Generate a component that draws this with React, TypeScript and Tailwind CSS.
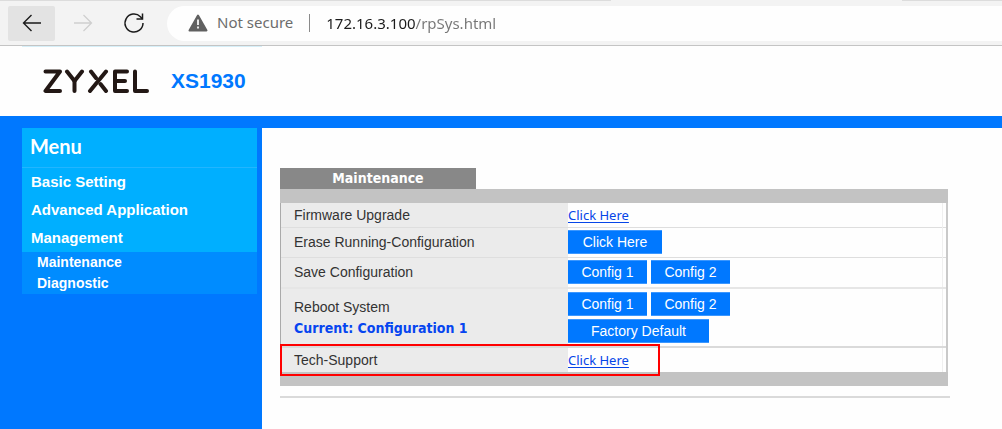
import type { ButtonHTMLAttributes, ReactNode } from "react";

const menuItems = ["Basic Setting", "Advanced Application", "Management"];
const subItems = ["Maintenance", "Diagnostic"];

function ActionButton({ className = "w-[79px]", ...props }: ButtonHTMLAttributes<HTMLButtonElement>) {
  return (
    <button
      type="button"
      className={`h-6 border-y border-[#3b97ff] bg-[#0078ff] text-sm leading-5 text-white ${className}`}
      {...props}
    />
  );
}

function ClickLink({ label }: { label: string }) {
  return (
    <a href="#" aria-label={label} className="font-['Noto_Sans',sans-serif] text-[13px] leading-5 text-[#0645e8] underline underline-offset-2">
      Click Here
    </a>
  );
}

function Row({ label, children, className, line = "border-b border-[#dedede]" }: { label: ReactNode; children: ReactNode; className: string; line?: string }) {
  return (
    <tr className={`${className} ${line}`}>
      <th scope="row" className="relative w-[287px] bg-[#ebebeb] pl-[13px] text-left font-normal">
        {label}
      </th>
      <td className="p-0">{children}</td>
      <td className="w-1 border-l border-[#efefef] p-0" />
    </tr>
  );
}

function ZyxelLogo() {
  return (
    <svg width="106" height="24" viewBox="0 0 106 24" role="img" aria-label="Zyxel" fill="none" stroke="#231815" strokeWidth="4" strokeLinecap="round" strokeLinejoin="round">
      <polyline points="2.5,2.5 17,2.5 2.5,22 17,22" />
      <polyline points="24,2.5 31.5,12 39,2.5" />
      <line x1="31.5" y1="12" x2="31.5" y2="22" />
      <line x1="48" y1="2.5" x2="53" y2="9" />
      <line x1="63" y1="2.5" x2="47" y2="22" />
      <line x1="57.5" y1="15" x2="63" y2="22" />
      <polyline points="84,2.5 72,2.5 72,22 84,22" />
      <line x1="72" y1="12" x2="82" y2="12" />
      <polyline points="92,2.5 92,22 104,22" />
    </svg>
  );
}

function BrowserBar() {
  return (
    <div className="bg-[#f3f3f3]">
      <div className="flex h-px justify-between">
        <span className="w-[61%] bg-[#dcdcdc]" />
        <span className="w-[10%] bg-[#dcdcdc]" />
      </div>
      <div className="flex h-[45px] items-center border-b border-[#c4c4c4] pl-2">
        <button type="button" aria-label="Back" className="flex h-[35px] w-[47px] items-center justify-center rounded-xs bg-[#e3e3e3]">
          <svg width="20" height="18" viewBox="0 0 20 18" fill="none" stroke="#1b1b1b" strokeWidth="1.4">
            <path d="M19 9H1.5M9.5 1L1.5 9l8 8" />
          </svg>
        </button>
        <button type="button" aria-label="Forward" className="ml-1 flex h-[35px] w-[47px] items-center justify-center">
          <svg width="20" height="18" viewBox="0 0 20 18" fill="none" stroke="#cfcfcf" strokeWidth="1.3">
            <path d="M1 9h17.5M10.5 1l8 8-8 8" />
          </svg>
        </button>
        <button type="button" aria-label="Refresh" className="ml-1 flex h-[35px] w-[47px] items-center justify-center">
          <svg width="22" height="22" viewBox="0 0 22 22" fill="none" stroke="#1b1b1b" strokeWidth="1.5">
            <path d="M20 11a9 9 0 1 1-2.6-6.3L19.5 7" />
            <path d="M19.5 1.5V7H13.5" />
          </svg>
        </button>
        <div className="ml-[10px] flex h-[35px] flex-1 items-center rounded-l-full bg-[#fefefe] pl-[21px] font-['Noto_Sans',sans-serif] text-[15px]">
          <svg width="20" height="18" viewBox="0 0 20 18" aria-hidden="true">
            <path d="M10 1.5L18.5 16.5H1.5Z" fill="#606060" stroke="#606060" strokeWidth="2" strokeLinejoin="round" />
            <path d="M10 5.5v5.5M10 12.5v2" stroke="#fff" strokeWidth="1.7" />
          </svg>
          <span className="ml-[9px] whitespace-nowrap text-[#6c6c6c]">Not secure</span>
          <span className="ml-4 h-[18px] w-px bg-[#8a8a8a]" />
          <input
            aria-label="Address"
            defaultValue="172.16.3.100/rpSys.html"
            className="ml-4 h-8 min-w-0 flex-1 bg-linear-[90deg,#1b1b1b_89px,#767676_89px] bg-clip-text text-transparent outline-none"
          />
        </div>
      </div>
    </div>
  );
}

export default function App() {
  return (
    <div className="flex min-h-screen flex-col bg-[#fefefe] font-['Liberation_Sans',Arial,sans-serif] text-sm text-[#333]">
      <BrowserBar />
      <span className="ml-[22px] h-px w-60 bg-[#d6eff8]" />
      <header className="flex h-[69px] items-center gap-[22px] pb-[2px] pl-[43px]">
        <ZyxelLogo />
        <h1 className="text-[21px] leading-7 font-bold text-[#0078ff]">XS1930</h1>
      </header>
      <div className="flex flex-1 border-t-[12px] border-[#0078ff]">
        <nav aria-label="Menu" className="w-[262px] shrink-0 bg-[#0078ff] pr-[5px] pl-[22px] font-bold text-white">
          <div className="bg-[#00afff]">
            <h2 className="h-10 border-b border-[#22b5ff] pl-2 font-[Lato,sans-serif] text-xl leading-9">Menu</h2>
            <ul>
              {menuItems.map((item) => (
                <li key={item} className="h-7 pl-[9px]">
                  <a href="#" className="text-[15px] leading-7">{item}</a>
                </li>
              ))}
            </ul>
          </div>
          <ul className="bg-[#008cff]">
            {subItems.map((item) => (
              <li key={item} className="h-[21px] pl-[15px]">
                <a href="#" className="text-sm leading-[21px]">{item}</a>
              </li>
            ))}
          </ul>
        </nav>
        <main className="flex-1 pt-10 pr-[52px] pl-[18px]">
          <h2 className="h-[21px] w-[196px] bg-[#888] text-center font-['DejaVu_Sans_Condensed','DejaVu_Sans',sans-serif] text-sm leading-[21px] font-bold text-white">
            Maintenance
          </h2>
          <div className="mr-[2px] border-y-[14px] border-[#c3c3c3]">
            <div className="border-r-2 border-l border-r-[#c9c9c9] border-l-[#aaa]">
              <table className="w-full border-collapse">
                <tbody>
                  <Row label="Firmware Upgrade" className="h-6">
                    <ClickLink label="Click Here: Firmware Upgrade" />
                  </Row>
                  <Row label="Erase Running-Configuration" className="h-[30px]">
                    <ActionButton className="w-[94px]">Click Here</ActionButton>
                  </Row>
                  <Row label="Save Configuration" className="h-[31px]" line="border-b-2 border-[#e6e6e6]">
                    <div className="flex gap-1">
                      <ActionButton>Config 1</ActionButton>
                      <ActionButton>Config 2</ActionButton>
                    </div>
                  </Row>
                  <Row
                    className="h-[59px]"
                    line="border-b-2 border-[#dadada]"
                    label={
                      <>
                        <span className="block leading-[21px]">Reboot System</span>
                        <span className="block font-['DejaVu_Sans_Condensed','DejaVu_Sans',sans-serif] leading-[21px] font-bold text-[#0645f0]">Current: Configuration 1</span>
                      </>
                    }
                  >
                    <div className="flex gap-1">
                      <ActionButton>Config 1</ActionButton>
                      <ActionButton>Config 2</ActionButton>
                    </div>
                    <ActionButton className="mt-[3px] block w-[141px]">Factory Default</ActionButton>
                  </Row>
                  <Row
                    className="h-[25px]"
                    line=""
                    label={
                      <>
                        Tech-Support
                        <span aria-hidden="true" className="pointer-events-none absolute -top-1 -left-px h-8 w-[380px] border-2 border-[#f00]" />
                      </>
                    }
                  >
                    <ClickLink label="Click Here: Tech-Support" />
                  </Row>
                </tbody>
              </table>
            </div>
          </div>
          <hr className="mt-[10px] border-t-2 border-[#dadada]" />
        </main>
      </div>
    </div>
  );
}
